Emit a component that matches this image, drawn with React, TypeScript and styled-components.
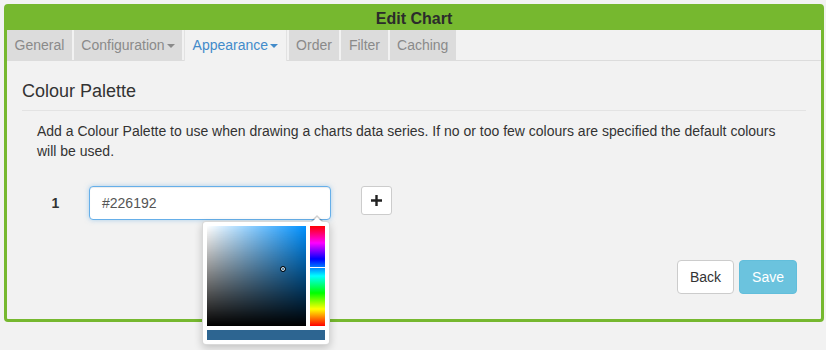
import React from "react";
import styled, { createGlobalStyle } from "styled-components";

const GlobalStyle = createGlobalStyle`
  html, body {
    min-height: 350px;
  }
  body {
    margin: 0;
    padding: 4px 2px 0 4px;
    box-sizing: border-box;
    background: #f2f2f2;
    font-family: "Liberation Sans", Arial, sans-serif;
    font-size: 14px;
    color: #333;
  }
  #root {
    min-height: 346px;
  }
`;

const Panel = styled.div`
  border: 3px solid #76b82f;
  border-radius: 4px;
  background: #f2f2f2;
`;

const Header = styled.div`
  height: 23px;
  line-height: 23px;
  background: #76b82f;
  text-align: center;
  font-size: 16px;
  font-weight: bold;
  color: #2b2b2b;
`;

const TabBar = styled.div`
  display: flex;
  height: 30px;
  border-bottom: 1px solid #dcdcdc;
`;

const Tab = styled.div<{ $active?: boolean }>`
  display: flex;
  align-items: center;
  height: 31px;
  box-sizing: border-box;
  padding: 0 7.5px 1px;
  margin-right: 2px;
  background: ${(p) => (p.$active ? "#f2f2f2" : "#dcdcdc")};
  border-left: ${(p) => (p.$active ? "1px solid #e2e2e2" : "none")};
  border-right: ${(p) => (p.$active ? "1px solid #e2e2e2" : "none")};
  color: ${(p) => (p.$active ? "#428bca" : "#8a8a8a")};
  white-space: nowrap;
`;

const Caret = styled.span`
  display: inline-block;
  margin-left: 2px;
  margin-top: 2px;
  border-top: 4px solid currentColor;
  border-left: 4px solid transparent;
  border-right: 4px solid transparent;
`;

const Content = styled.div`
  padding: 20px 15px 25px;
`;

const Heading = styled.h3`
  margin: 0 0 9px;
  font-size: 18px;
  font-weight: normal;
  line-height: 20px;
  color: #333;
`;

const Rule = styled.hr`
  margin: 0 0 10px;
  border: 0;
  border-top: 1px solid #e3e3e3;
`;

const Intro = styled.p`
  margin: 0 0 25px;
  padding: 0 15px;
  line-height: 20px;
`;

const PaletteRow = styled.div`
  display: flex;
  align-items: flex-start;
  padding-left: 15px;
`;

const Index = styled.div`
  width: 37px;
  height: 34px;
  line-height: 34px;
  margin-right: 15px;
  text-align: center;
  font-weight: bold;
`;

const InputWrap = styled.div`
  position: relative;
  z-index: 2;
  width: 242px;
  margin-right: 30px;
`;

const ColourInput = styled.div`
  height: 34px;
  box-sizing: border-box;
  padding: 0 12px;
  line-height: 32px;
  background: #fff;
  border: 1px solid #66afe9;
  border-radius: 4px;
  box-shadow: inset 0 1px 1px rgba(0, 0, 0, 0.075), 0 0 5px rgba(102, 175, 233, 0.5);
  color: #555;
`;

const Picker = styled.div`
  position: absolute;
  top: 35px;
  right: 1px;
  width: 128px;
  box-sizing: border-box;
  padding: 4px;
  background: #fff;
  border: 1px solid rgba(0, 0, 0, 0.15);
  border-radius: 4px;
  box-shadow: 0 3px 8px rgba(0, 0, 0, 0.2);

  &:before,
  &:after {
    content: "";
    position: absolute;
    border-left: 6px solid transparent;
    border-right: 6px solid transparent;
  }
  &:before {
    top: -7px;
    right: 6px;
    border-bottom: 6px solid rgba(0, 0, 0, 0.18);
  }
  &:after {
    top: -5px;
    right: 6px;
    border-bottom: 6px solid #fff;
  }
`;

const PickerTop = styled.div`
  display: flex;
  gap: 4px;
`;

const Saturation = styled.div`
  position: relative;
  width: 100px;
  height: 100px;
  background: linear-gradient(to bottom, rgba(0, 0, 0, 0), #000),
    linear-gradient(to right, #fff, rgba(255, 255, 255, 0)), rgb(0, 145, 255);
`;

const SatDot = styled.span`
  position: absolute;
  left: 73px;
  top: 40px;
  width: 6px;
  height: 6px;
  box-sizing: border-box;
  border: 1px solid #000;
  border-radius: 50%;
  box-shadow: inset 0 0 0 1px #fff;
`;

const Hue = styled.div`
  position: relative;
  width: 15px;
  height: 100px;
  background: linear-gradient(
    to bottom,
    #f00 0%,
    #f0f 17%,
    #00f 33%,
    #0ff 50%,
    #0f0 67%,
    #ff0 83%,
    #f00 100%
  );
`;

const HueMark = styled.span`
  position: absolute;
  left: 0;
  right: 0;
  top: 41px;
  height: 1px;
  background: #fff;
`;

const Preview = styled.div`
  height: 10px;
  margin-top: 4px;
  background: #2d6591;
`;

const IconButton = styled.button`
  display: flex;
  align-items: center;
  justify-content: center;
  width: 31px;
  height: 29px;
  padding: 0;
  background: #fff;
  border: 1px solid #ccc;
  border-radius: 3px;
`;

const Footer = styled.div`
  display: flex;
  justify-content: flex-end;
  gap: 5px;
  margin-top: 40px;
  padding-right: 9px;
`;

const Button = styled.button<{ $primary?: boolean }>`
  height: 34px;
  padding: 0 12px;
  font-family: "Liberation Sans", Arial, sans-serif;
  font-size: 14px;
  border-radius: 4px;
  border: 1px solid ${(p) => (p.$primary ? "#62bedb" : "#ccc")};
  background: ${(p) => (p.$primary ? "#6bc3de" : "#fff")};
  color: ${(p) => (p.$primary ? "#fff" : "#333")};
`;

const tabs = [
  { label: "General" },
  { label: "Configuration", caret: true },
  { label: "Appearance", caret: true, active: true },
  { label: "Order" },
  { label: "Filter" },
  { label: "Caching" },
];

const App = () => (
  <>
    <GlobalStyle />
    <Panel>
      <Header>Edit Chart</Header>
      <TabBar>
        {tabs.map((t) => (
          <Tab key={t.label} $active={t.active}>
            {t.label}
            {t.caret && <Caret />}
          </Tab>
        ))}
      </TabBar>
      <Content>
        <Heading>Colour Palette</Heading>
        <Rule />
        <Intro>
          Add a Colour Palette to use when drawing a charts data series. If no or too few colours
          are specified the default colours will be used.
        </Intro>
        <PaletteRow>
          <Index>1</Index>
          <InputWrap>
            <ColourInput>#226192</ColourInput>
            <Picker>
              <PickerTop>
                <Saturation>
                  <SatDot />
                </Saturation>
                <Hue>
                  <HueMark />
                </Hue>
              </PickerTop>
              <Preview />
            </Picker>
          </InputWrap>
          <IconButton>
            <svg width="11" height="11" viewBox="0 0 11 11">
              <path d="M4.3 0h2.4v4.3H11v2.4H6.7V11H4.3V6.7H0V4.3h4.3z" fill="#222" />
            </svg>
          </IconButton>
        </PaletteRow>
        <Footer>
          <Button>Back</Button>
          <Button $primary>Save</Button>
        </Footer>
      </Content>
    </Panel>
  </>
);

export default App;
